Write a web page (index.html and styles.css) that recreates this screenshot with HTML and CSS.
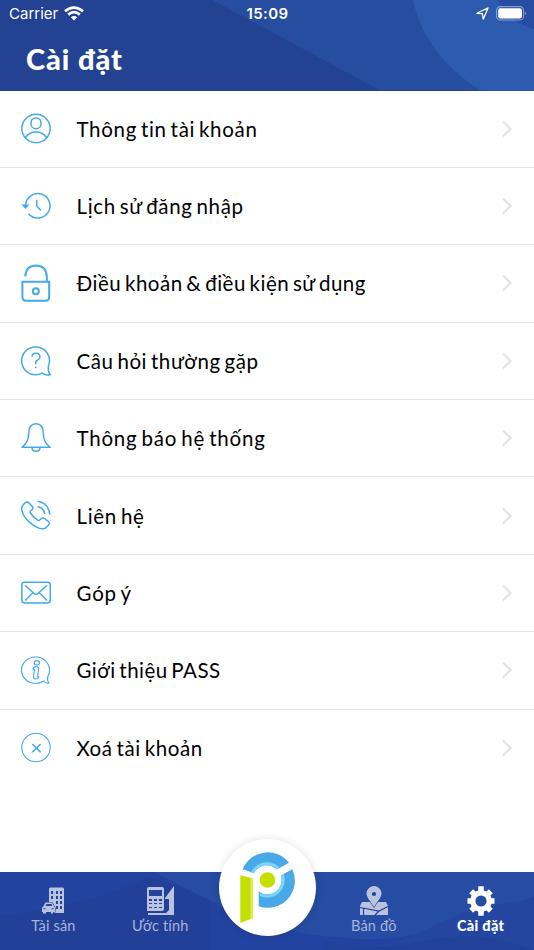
FILE: index.html
```html
<!DOCTYPE html>
<html lang="vi">
<head>
<meta charset="utf-8">
<title>Cài đặt</title>
<link rel="stylesheet" href="styles.css">
</head>
<body>
<div class="app">
  <header class="header">
    <svg class="backdrop" viewBox="0 0 534 90" preserveAspectRatio="none"><path fill="#264d9f" d="M212 0H534V90H380Z"/><path fill="#2d5baf" d="M413 0C420 35 444 68 481 90H534V0Z"/><path fill="#264d9f" d="M497 0Q510 22 534 29V0Z"/></svg>
    <div class="status">
      <div class="carrier"><span>Carrier</span><svg width="20" height="15" viewBox="0 0 20 15" fill="none" stroke="#fff" stroke-width="2.7"><path d="M1 5.3Q10-2.2 19 5.3M4.2 8.6Q10 3.8 15.8 8.6"/><path d="M6.8 11.2Q10 8.7 13.2 11.2L10 14.4Z" fill="#fff" stroke="none"/></svg></div>
      <span class="time">15:09</span>
      <div class="indicators"><svg width="13" height="13" viewBox="0 0 12 12" fill="none" stroke="#fff" stroke-width="1.2" stroke-linejoin="round"><path d="M.8 5.8 11.2.8 6.7 11.2 5.9 6.1Z"/></svg><svg width="32" height="15" viewBox="0 0 32 15"><rect x=".6" y=".6" width="27" height="13.4" rx="3.8" fill="none" stroke="#fff" stroke-opacity=".45" stroke-width="1.1"/><rect x="2.2" y="2.2" width="23.8" height="10.2" rx="2.2" fill="#fff"/><path d="M29.2 5.3q2 2 0 4Z" fill="#fff" opacity=".5"/></svg></div>
    </div>
    <h1 class="title">Cài đặt</h1>
  </header>
  <main class="menu">
    <div class="row"><svg class="icon" viewBox="0 0 40 40"><circle cx="20" cy="19.5" r="14.2"/><rect x="15" y="8.9" width="10" height="10.8" rx="4.8"/><path d="M9.5 28.5Q13 23 20 23T30.5 28.5"/></svg><span class="label r1">Thông tin tài khoản</span><svg class="chevron" viewBox="0 0 12 18"><path d="m2 1.5 7.5 7.5L2 16.5"/></svg></div>
    <div class="row"><svg class="icon" viewBox="0 0 40 40"><path d="M9.6 20A12.2 12.2 0 1 1 12.5 27.7M20.7 13.8V20l4.3 4.5"/><path class="solid" d="M5.2 18.2q4.2 .8 8.4 0L9.5 22.9Z"/></svg><span class="label r2">Lịch sử đăng nhập</span><svg class="chevron" viewBox="0 0 12 18"><path d="m2 1.5 7.5 7.5L2 16.5"/></svg></div>
    <div class="row"><svg class="icon bold" viewBox="0 0 40 40"><path d="M6.4 18.8H33.2V34Q33.2 37.8 29.4 37.8H10.2Q6.4 37.8 6.4 34ZM9.3 13.5Q9.8 2.5 20 2.5T30.8 13.5V18.8"/><circle cx="19.8" cy="28.3" r="3"/></svg><span class="label r3">Điều khoản &amp; điều kiện sử dụng</span><svg class="chevron" viewBox="0 0 12 18"><path d="m2 1.5 7.5 7.5L2 16.5"/></svg></div>
    <div class="row"><svg class="icon" viewBox="0 0 40 40"><path d="M26 32.2A13.9 13.9 0 1 1 32.3 25.5Q31.8 30.5 34.1 33.8Q30 34.7 26 32.2Z"/><path d="M16 15.8Q16.2 12.2 20 12.2T24 16Q24 18 21.6 19.2T19.8 22V23.3M19.8 25.8V27.3"/></svg><span class="label r4">Câu hỏi thường gặp</span><svg class="chevron" viewBox="0 0 12 18"><path d="m2 1.5 7.5 7.5L2 16.5"/></svg></div>
    <div class="row"><svg class="icon" viewBox="0 0 40 40"><path d="M6 29.3Q12.6 24.5 12.6 16Q12.6 5.7 20 5.7T27.4 16Q27.4 24.5 34.2 29.3ZM16 29.8Q16 33.3 20 33.3T24 29.8" stroke-linejoin="round"/></svg><span class="label r5">Thông báo hệ thống</span><svg class="chevron" viewBox="0 0 12 18"><path d="m2 1.5 7.5 7.5L2 16.5"/></svg></div>
    <div class="row"><svg class="icon" viewBox="0 0 40 40"><path d="M9 6.8Q11.4 5.3 13.2 7.2L16.3 10.5Q17.8 12.2 15.8 13.8Q13.4 15.2 14.5 17Q17.3 21.7 22 24.3Q23.2 25 24.8 23Q26.7 21.1 28.7 22.5L32 25.2Q34.3 27.2 32.3 29.3L29.8 31.8Q27.8 33.7 23 32.1C13.8 28.7 6.2 20 5.7 12.7Q5.5 10.2 9 6.8ZM21.5 10.8Q28 11.4 28.7 18.2M21.5 5.3Q32.6 7 33.8 18.7"/></svg><span class="label r6">Liên hệ</span><svg class="chevron" viewBox="0 0 12 18"><path d="m2 1.5 7.5 7.5L2 16.5"/></svg></div>
    <div class="row"><svg class="icon" viewBox="0 0 40 40"><rect x="5.8" y="9.2" width="28.5" height="20.9" rx="3"/><path d="M9.2 12.5 18.2 20.5Q20 22.2 21.8 20.5L31 12.5M9.2 27.5 16.8 19.8M31 27.5 23.2 19.8"/></svg><span class="label r7">Góp ý</span><svg class="chevron" viewBox="0 0 12 18"><path d="m2 1.5 7.5 7.5L2 16.5"/></svg></div>
    <div class="row"><svg class="icon fine" viewBox="0 0 40 40"><path d="M27.5 31A14 13.2 0 1 1 31.8 26.5Q30.7 30.3 33 33Q29.8 33.7 27.5 31Z"/><ellipse cx="20.8" cy="12.8" rx="2.7" ry="2.2"/><path d="M17.2 17.5Q21.7 15.6 22.8 18.1L21.7 26.1Q22 27.7 23.2 26.8Q21 29.8 18.3 28.8Q17 28.3 17.6 24.8L18.5 20Q18 18.3 17.2 19.5Z"/></svg><span class="label r8">Giới thiệu PASS</span><svg class="chevron" viewBox="0 0 12 18"><path d="m2 1.5 7.5 7.5L2 16.5"/></svg></div>
    <div class="row"><svg class="icon fine" viewBox="0 0 40 40"><circle cx="20" cy="19.5" r="14.2"/><path stroke-width="1.6" d="m16.3 16 8.3 8.3m0-8.3-8.3 8.3"/></svg><span class="label r9">Xoá tài khoản</span><svg class="chevron" viewBox="0 0 12 18"><path d="m2 1.5 7.5 7.5L2 16.5"/></svg></div>
  </main>
  <nav class="tabs">
    <svg class="backdrop" viewBox="0 0 534 78" preserveAspectRatio="none"><path fill="#2343a1" d="M0 0H534V78H0Z"/><path fill="#224097" d="M0 43Q75 38 150 5L210 25V78H0Z"/><path fill="#264da3" d="M155 0H534V25Q410 77 340 65Q270 65 155 0Z"/><path fill="#2446a1" d="M316 78Q390 78 432 55T534 28V78Z"/><path fill="#21419b" d="M324 68Q370 82 425 69T534 78H324Z"/></svg>
    <a class="tab"><svg width="32" height="32" viewBox="0 0 32 32"><path d="M12 4Q12 2.5 13.5 2.5H25.5Q27 2.5 27 4V28H16V21Q16 18 13 18H12Z"/><path class="cut" d="M14 6h2v3h-2zm5 0h2v3h-2zm4 0h2v3h-2zM14 11h2v3h-2zm5 0h2v3h-2zm4 0h2v3h-2zM19 16h2v3h-2zm4 0h2v3h-2zM19 21h2v3h-2zm4 0h2v3h-2z"/><path class="car" d="m6.5 21 2-3.5h6.5l2 3.5 1 2v4h-2v1.5h-2V27H9v1.5H6V27H5v-4Z"/><path class="cut" d="m8.5 21 1-2h5l1 2ZM6.5 23.3h2v1h-2zm8 0h2v1h-2z"/></svg><span>Tài sản</span></a>
    <a class="tab estimate"><svg width="32" height="32" viewBox="0 0 32 32"><path d="M3 4Q3 2 5 2H18Q20 2 20 4V24Q20 26 18 26H3ZM21 13 30 1V30H4V28H22L25 25V14H21Z"/><path class="cut" d="M5 5h13v6H5zm0 9h3v2H5zm5 0h3v2h-3zm5 0h3v2h-3zM5 18h3v1H5zm5 0h3v1h-3zm5 0h3v1h-3zM5 22h3v1H5zm5 0h3v1h-3zm5 0h3v1h-3z"/></svg><span>Ước tính</span></a>
    <a class="brand"><svg viewBox="0 0 97 97"><path fill="#49a9e8" d="M23.7 30.3A27 27 0 0 1 70 23.7L57.8 30.6A14.2 14.2 0 0 0 34.9 34ZM73.3 30.3A27 27 0 0 1 39.7 67.2V52.4A14.2 14.2 0 0 0 61.8 36.5Z"/><path fill="none" stroke="#79d5fb" stroke-width="3" d="M33.6 33.8A16 16 0 0 1 59.2 29.4M41 55.3A16 16 0 0 0 63.4 35.8"/><circle cx="48.5" cy="41" r="7.8" fill="#c4df00"/><path fill="#c4df00" d="m21.3 36.3 12.7 3V79L21.3 84Z"/><path fill="#dced55" d="m31.5 38.7 2.5.6V79l-2.5 1Z"/></svg></a>
    <a class="tab map"><svg width="32" height="32" viewBox="0 0 32 32"><path d="M4 17H28L30 21V30H2V21Z"/><path class="pin" d="M16 22C13 17 8.500 12.500 8.500 8.500A7.500 7.500 0 0 1 23.500 8.500C23.500 12.500 19 17 16 22Z"/><circle class="cut" cx="16" cy="9" r="2.1"/><path class="line" d="M2 22.500 21 26 30 21.500M5.500 23V30M21 26 17 30"/></svg><span>Bản đồ</span></a>
    <a class="tab active"><svg width="32" height="32" viewBox="0 0 32 32"><circle cx="16" cy="16" r="8.2" fill="none" stroke="#fff" stroke-width="5.2"/><path fill="none" stroke="#fff" stroke-width="5.5" d="M16 1.2V6M16 26v4.8M2.500 16H7M25 16h4.500M6.200 6.200 9 9M23 23l2.800 2.800M6.200 25.800 9 23M23 9l2.800-2.800"/></svg><span>Cài đặt</span></a>
  </nav>
</div>
</body>
</html>
```
FILE: styles.css
```css
* { box-sizing: border-box; }
body { margin: 0; background: #fff; font-family: Lato, "Noto Sans", sans-serif; font-variant-ligatures: none; }
.app { display: flex; flex-direction: column; width: 534px; height: 950px; overflow: hidden; }
.header { position: relative; flex: none; height: 90.5px; background: #234292; color: #fff; }
.backdrop { position: absolute; inset: 0; width: 100%; height: 100%; }
.status { position: relative; display: grid; grid-template-columns: 1fr auto 1fr; align-items: center; height: 27px; padding: 0 7px 0 9px; font: 15px Inter, sans-serif; }
.carrier { display: flex; align-items: center; gap: 6px; letter-spacing: 0; }
.time { font-weight: 600; letter-spacing: .4px; margin-right: 1px; }
.indicators { display: flex; justify-content: flex-end; align-items: center; gap: 7px; }
.indicators svg:last-child { margin-right: -1px; }
.title { position: relative; margin: 12px 0 0 26px; font-size: 29px; line-height: 40px; font-weight: 900; letter-spacing: .9px; }
.menu { flex: 1; }
.row { display: flex; align-items: center; height: 77.4px; padding: 0 21px 0 16px; border-bottom: 1.5px solid #e7e7e7; }
.row:last-child { border-bottom: 0; }
.icon { width: 40px; height: 40px; flex: none; fill: none; stroke: #43a9e8; stroke-width: 1.5; }
.icon.bold { stroke-width: 2; }
.icon.fine { stroke-width: 1.1; }
.icon .solid { fill: #43a9e8; stroke: none; }
.label { flex: 1; margin-left: 20.5px; font-size: 20.5px; line-height: 30px; color: #000; white-space: nowrap; word-spacing: -2px; }
.r1 { letter-spacing: .68px; }
.r2 { letter-spacing: .66px; }
.r3 { letter-spacing: .5px; }
.r4 { letter-spacing: .58px; }
.r5 { letter-spacing: .79px; }
.r6 { letter-spacing: .7px; }
.r7 { letter-spacing: .8px; }
.r8 { letter-spacing: .46px; }
.r9 { letter-spacing: .62px; }
.chevron { width: 12px; height: 18px; fill: none; stroke: #e3e3e3; stroke-width: 2.2; }
.tabs { position: relative; flex: none; display: grid; grid-template-columns: repeat(5, 1fr); height: 78px; background: #2343a1; }
.tab { position: relative; display: flex; flex-direction: column; align-items: center; padding-top: 13px; color: #aab5d9; fill: #b9c3e0; font-size: 14.5px; line-height: 18px; letter-spacing: .15px; }
.tab svg { display: block; flex: none; }
.cut { fill: #23429b; }
.car, .pin { stroke: #23429b; stroke-width: 1.2; paint-order: stroke; }
.line { fill: none; stroke: #23429b; stroke-width: 1.2; }
.active { color: #fff; font-weight: 900; letter-spacing: .3px; }
.brand { position: relative; width: 97px; height: 97px; margin: -33px auto 0; margin-left: 5px; border-radius: 50%; background: #fff; box-shadow: 0 0 10px rgba(0,0,0,.12); }
.brand svg { width: 97px; height: 97px; display: block; }
```
